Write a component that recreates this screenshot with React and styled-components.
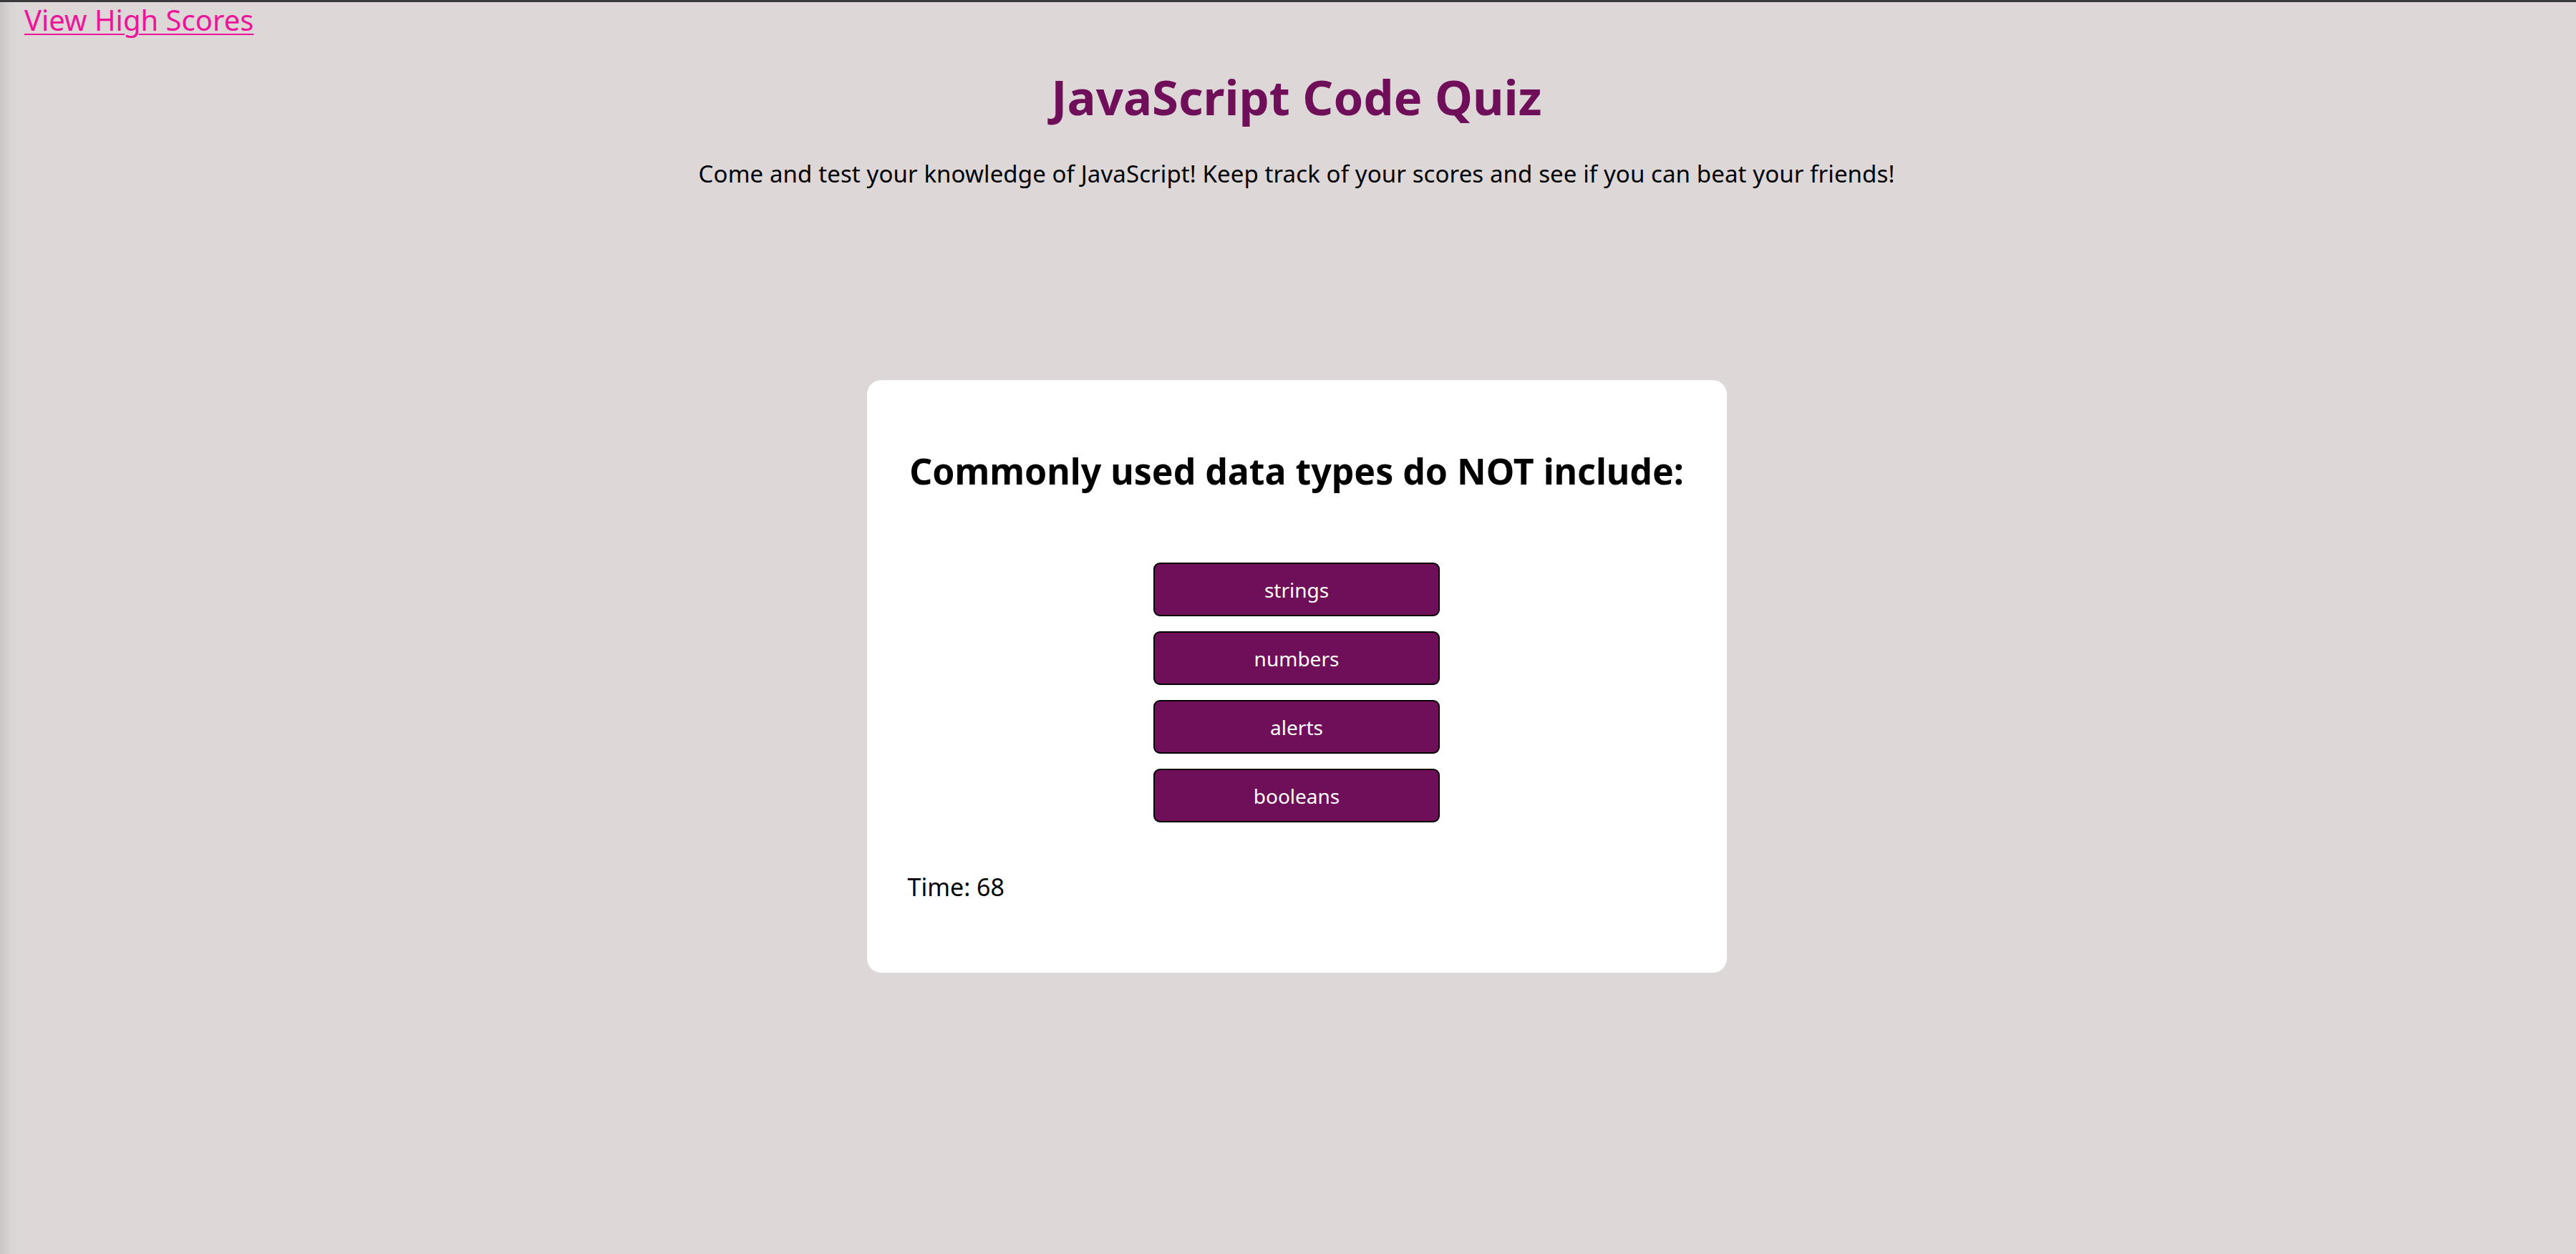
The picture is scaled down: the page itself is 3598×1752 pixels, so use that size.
import React from "react";
import styled, { createGlobalStyle } from "styled-components";

const GlobalStyle = createGlobalStyle`
  html, body {
    margin: 0;
    padding: 0;
  }

  body {
    background: linear-gradient(to right, #c9c5c5 0px, #d8d3d4 14px, #ddd7d8 28px, #ddd7d8 100%);
    font-family: "Noto Sans", "DejaVu Sans", sans-serif;
    color: #000;
  }
`;

const Page = styled.div`
  min-height: 100vh;
  box-sizing: border-box;
  border-top: 3px solid #3a3a3c;
  padding-left: 24px;
  display: flex;
  flex-direction: column;
`;

const TopBar = styled.nav`
  display: flex;
  padding-left: 10px;
  height: 50px;
  align-items: flex-start;
`;

const ScoresLink = styled.a`
  color: #ec1599;
  font-size: 40px;
  line-height: 50px;
  text-decoration: underline;
  text-decoration-thickness: 2px;
  text-underline-offset: 4px;
  cursor: pointer;
`;

const Header = styled.header`
  display: flex;
  flex-direction: column;
  align-items: center;
  text-align: center;
`;

const Title = styled.h1`
  margin: 42px 0 0;
  color: #6f0f59;
  font-size: 67px;
  font-weight: 700;
  line-height: 80px;
`;

const Subtitle = styled.p`
  margin: 48px 0 0;
  font-size: 33px;
  letter-spacing: 0.1px;
  line-height: 40px;
`;

const Card = styled.main`
  align-self: center;
  margin-top: 268px;
  width: 1201px;
  box-sizing: border-box;
  background: #fff;
  border-radius: 20px;
  padding: 91px 57px 100px;
  display: flex;
  flex-direction: column;
`;

const Question = styled.h2`
  margin: 0;
  text-align: center;
  white-space: nowrap;
  font-size: 50px;
  line-height: 72px;
  font-weight: 700;
`;

const Choices = styled.div`
  margin-top: 92px;
  display: flex;
  flex-direction: column;
  align-items: center;
  gap: 21px;
`;

const Choice = styled.button`
  width: 400px;
  height: 75px;
  box-sizing: border-box;
  background: #6f0f59;
  color: #fff;
  border: 2px solid #000;
  border-radius: 9px;
  font-family: inherit;
  font-size: 28px;
  cursor: pointer;
`;

const Timer = styled.p`
  margin: 70px 0 0;
  font-size: 34px;
  line-height: 40px;
`;

const choices = ["strings", "numbers", "alerts", "booleans"];

export default function App() {
  return (
    <>
      <GlobalStyle />
      <Page>
        <TopBar>
          <ScoresLink href="#">View High Scores</ScoresLink>
        </TopBar>
        <Header>
          <Title>JavaScript Code Quiz</Title>
          <Subtitle>
            Come and test your knowledge of JavaScript! Keep track of your scores and see if you can beat your friends!
          </Subtitle>
        </Header>
        <Card>
          <Question>Commonly used data types do NOT include:</Question>
          <Choices>
            {choices.map((c) => (
              <Choice key={c}>{c}</Choice>
            ))}
          </Choices>
          <Timer>Time: 68</Timer>
        </Card>
      </Page>
    </>
  );
}
